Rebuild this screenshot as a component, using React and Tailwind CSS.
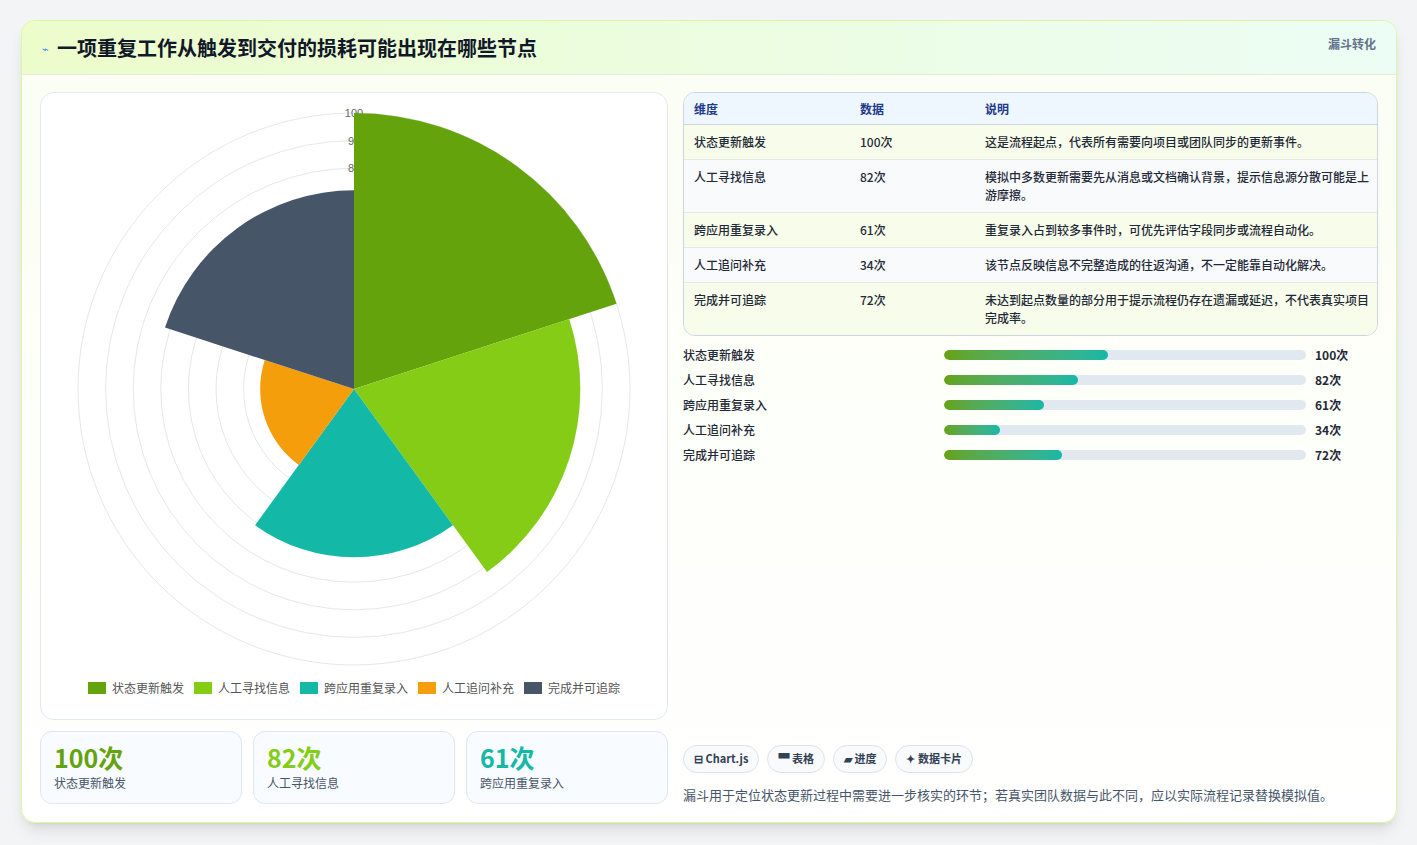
import React from "react";

const data = [
  { n: "状态更新触发", v: 100, c: "#65a30d", d: "这是流程起点，代表所有需要向项目或团队同步的更新事件。" },
  { n: "人工寻找信息", v: 82, c: "#84cc16", d: "模拟中多数更新需要先从消息或文档确认背景，提示信息源分散可能是上游摩擦。" },
  { n: "跨应用重复录入", v: 61, c: "#14b8a6", d: "重复录入占到较多事件时，可优先评估字段同步或流程自动化。" },
  { n: "人工追问补充", v: 34, c: "#f59e0b", d: "该节点反映信息不完整造成的往返沟通，不一定能靠自动化解决。" },
  { n: "完成并可追踪", v: 72, c: "#475569", d: "未达到起点数量的部分用于提示流程仍存在遗漏或延迟，不代表真实项目完成率。" },
];

function Polar() {
  const cx = 313, cy = 296, R = 276;
  const pt = (r, a) => [cx + r * Math.cos(a), cy + r * Math.sin(a)];
  return (
    <svg width="626" height="580" className="block">
      {Array.from({ length: 10 }, (_, i) => (
        <circle key={i} cx={cx} cy={cy} r={(R * (i + 1)) / 10} fill="none" stroke="#e5e7eb" strokeWidth="1" />
      ))}
      {[100, 90, 80].map((t) => (
        <text key={t} x={cx} y={cy - (R * t) / 100 + 4} textAnchor="middle" fontSize="11" fill="#666" fontFamily="Liberation Sans, sans-serif">{t}</text>
      ))}
      {data.map((d, i) => {
        const a0 = -Math.PI / 2 + (i * 2 * Math.PI) / 5;
        const a1 = a0 + (2 * Math.PI) / 5;
        const r = (R * d.v) / 100;
        const [x0, y0] = pt(r, a0), [x1, y1] = pt(r, a1);
        return <path key={i} d={`M${cx},${cy} L${x0},${y0} A${r},${r} 0 0 1 ${x1},${y1} Z`} fill={d.c} />;
      })}
    </svg>
  );
}

export default function App() {
  const font = { fontFamily: '"Noto Sans CJK SC", "Noto Sans", sans-serif' };
  return (
    <div className="w-[1417px] h-[845px] bg-[#f3f4f6] pt-[20px] pl-[21px]" style={font}>
      <div className="w-[1376px] h-[803px] rounded-[14px] border border-[#d9f99d] bg-gradient-to-b from-[#fbfef3] to-white overflow-hidden shadow-lg flex flex-col">
        <div className="h-[55px] bg-gradient-to-r from-[#ecfccb] to-[#ecfdf5] border-b border-[#e2ecd8] flex items-start justify-between px-5 pt-[12px]">
          <div className="flex items-center gap-2">
            <span className="text-[11px] text-[#3b82f6]">⌁</span>
            <span className="text-[20px] font-bold text-[#111827]">一项重复工作从触发到交付的损耗可能出现在哪些节点</span>
          </div>
          <span className="text-[12px] font-bold text-[#64748b] mt-[2px]">漏斗转化</span>
        </div>
        <div className="flex-1 flex gap-[15px] px-[18px] pt-[17px] pb-[18px]">
          <div className="w-[628px] flex flex-col gap-[11px]">
            <div className="h-[628px] rounded-[14px] border border-[#e2e8f0] bg-white flex flex-col items-center">
              <div><Polar /></div>
              <div className="flex gap-[10px] mt-[6px] text-[12px] text-[#555]">
                {data.map((d) => (
                  <div key={d.n} className="flex items-center gap-[6px]">
                    <span className="w-[18px] h-[12px]" style={{ background: d.c }} />
                    {d.n}
                  </div>
                ))}
              </div>
            </div>
            <div className="flex gap-[11px]">
              {data.slice(0, 3).map((d) => (
                <div key={d.n} className="flex-1 h-[73px] rounded-[12px] border border-[#dbe7f3] bg-[#f8fbff] px-[13px] pt-[8px]">
                  <div className="text-[25px] font-bold leading-[34px]" style={{ color: d.c }}>{d.v}次</div>
                  <div className="text-[12px] text-[#475569]">{d.n}</div>
                </div>
              ))}
            </div>
          </div>
          <div className="w-[696px] flex flex-col">
            <div className="rounded-[12px] border border-[#cbd5e1] overflow-hidden text-[12px]">
              <div className="flex h-[32px] items-center bg-[#eef6fe] border-b border-[#cbd5e1] font-bold text-[#1e3a8a]">
                <div className="w-[176px] pl-[10px]">维度</div>
                <div className="w-[125px]">数据</div>
                <div className="flex-1">说明</div>
              </div>
              {data.map((d, i) => (
                <div key={d.n} className={`flex py-[8px] leading-[18px] font-medium text-[#1f2937] ${i % 2 ? "bg-[#f8fafc]" : "bg-[#f7fdea]"} ${i < 4 ? "border-b border-[#e5e7eb]" : ""}`}>
                  <div className="w-[176px] pl-[10px]">{d.n}</div>
                  <div className="w-[125px]">{d.v}次</div>
                  <div className="flex-1 pr-[8px]">{d.d}</div>
                </div>
              ))}
            </div>
            <div className="mt-[10px] flex flex-col gap-[7px] text-[12px]">
              {data.map((d) => (
                <div key={d.n} className="flex items-center h-[18px]">
                  <div className="w-[261px] font-medium text-[#1f2937]">{d.n}</div>
                  <div className="w-[362px] h-[10px] rounded-full bg-[#e2e8f0] overflow-hidden">
                    <div className="h-full rounded-full bg-gradient-to-r from-[#65a30d] to-[#14b8a6]" style={{ width: `${d.v * 1.64}px` }} />
                  </div>
                  <div className="ml-[9px] font-bold text-[#1f2937]">{d.v}次</div>
                </div>
              ))}
            </div>
            <div className="mt-auto flex gap-[8px] text-[11px] font-bold text-[#334155]">
              {["⊟ Chart.js", "▀ 表格", "▰ 进度", "✦ 数据卡片"].map((t) => (
                <span key={t} className="h-[28px] px-[10px] flex items-center rounded-full border border-[#dbe3ec] bg-[#f8fafc]">{t}</span>
              ))}
            </div>
            <div className="mt-[12px] text-[13px] text-[#475569]">漏斗用于定位状态更新过程中需要进一步核实的环节；若真实团队数据与此不同，应以实际流程记录替换模拟值。</div>
          </div>
        </div>
      </div>
    </div>
  );
}
